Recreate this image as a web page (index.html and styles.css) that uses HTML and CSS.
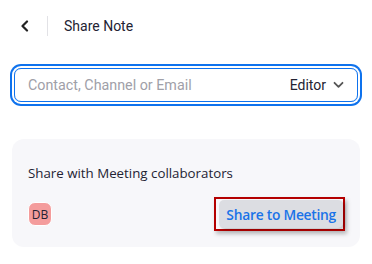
FILE: index.html
```html
<!DOCTYPE html>
<html>
<head>
<meta charset="utf-8">
<link rel="stylesheet" href="styles.css">
</head>
<body>
<div class="page">
  <header class="header">
    <button class="back" aria-label="Back">
      <svg width="10" height="12" viewBox="0 0 10 12"><path d="M7 1.5 L2.5 6 L7 10.5" fill="none" stroke="#222" stroke-width="2.2" stroke-linecap="round" stroke-linejoin="round"/></svg>
    </button>
    <span class="divider"></span>
    <h1 class="title">Share Note</h1>
  </header>

  <div class="search">
    <span class="placeholder">Contact, Channel or Email</span>
    <span class="role">Editor
      <svg width="11" height="8" viewBox="0 0 11 8"><path d="M1.5 1.8 L5.5 5.8 L9.5 1.8" fill="none" stroke="#555" stroke-width="1.8" stroke-linecap="round" stroke-linejoin="round"/></svg>
    </span>
  </div>

  <section class="card">
    <p class="card-title">Share with Meeting collaborators</p>
    <div class="card-row">
      <span class="avatar">DB</span>
      <span class="highlight"><button class="share-btn">Share to Meeting</button></span>
    </div>
  </section>
</div>
</body>
</html>
```

FILE: styles.css
```css
* { box-sizing: border-box; }
html, body { margin: 0; padding: 0; background: #fff; }
body { width: 372px; height: 264px; overflow: hidden; font-family: Roboto, "Liberation Sans", sans-serif; color: #232333; }
.page { padding: 0 10px 0 12px; }
.header { display: flex; align-items: center; height: 52px; padding-left: 6px; }
.back { border: 0; background: none; padding: 0; width: 14px; height: 20px; display: flex; align-items: center; justify-content: center; }
.divider { width: 1px; height: 20px; background: #e2e2e6; margin: 0 16px 0 15px; }
.title { font-size: 14px; font-weight: 400; margin: 0; color: #232333; }
.search { margin: 16px 4px 0 2px; height: 34px; border: 1px solid #0e72ed; border-radius: 7px; box-shadow: 0 0 0 2px #fff, 0 0 0 4px #0e72ed; display: flex; align-items: center; justify-content: space-between; padding: 0 13px 0 13px; }
.placeholder { font-size: 14.3px; color: #a0a0a8; }
.role { font-size: 14px; color: #232333; display: flex; align-items: center; gap: 7px; }
.card { margin-top: 37px; width: 348px; height: 108px; background: #f7f7fa; border-radius: 12px; padding: 26px 15px 0 16px; }
.card-title { margin: 0; font-family: "Open Sans", sans-serif; font-size: 13.3px; color: #232333; line-height: 16px; }
.card-row { display: flex; align-items: center; justify-content: space-between; margin-top: 16px; }
.avatar { width: 24px; height: 24px; border-radius: 7px; background: #f49c9c; border: 1px solid #fff; font-family: "Open Sans", sans-serif; font-size: 12px; display: flex; align-items: center; justify-content: center; color: #232333; }
.highlight { border: 2px solid #b40000; padding: 1px 0 1px 3px; box-shadow: 2px 3px 4px rgba(0,0,0,0.25); display: flex; }
.share-btn { border: 0; background: #dcdde2; border-radius: 5px; height: 28px; padding: 0 7px 0 7px; font-family: "Open Sans", sans-serif; font-weight: 600; font-size: 13.8px; letter-spacing: -0.25px; color: #1a73e8; box-shadow: 2px 2px 3px rgba(0,0,0,0.2); }
```
